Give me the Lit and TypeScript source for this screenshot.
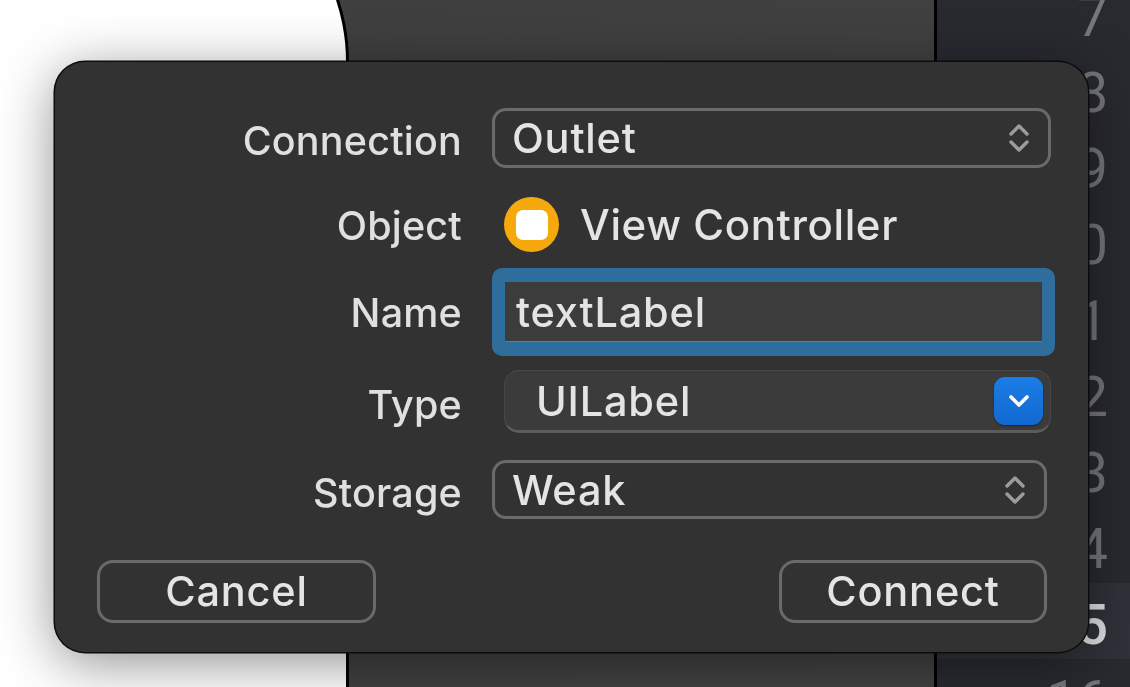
import { LitElement, html, css, svg } from "lit";
import { customElement } from "lit/decorators.js";

const stepper = svg`<svg class="stepper" width="24" height="32" viewBox="0 0 24 32" fill="none" stroke="#9c9c9c" stroke-width="3.4" stroke-linecap="round" stroke-linejoin="round"><path d="M4 12 L12 4 L20 12"/><path d="M4 20 L12 28 L20 20"/></svg>`;

@customElement("app-root")
export class AppRoot extends LitElement {
  static styles = css`
    :host { display: block; width: 1130px; height: 687px; overflow: hidden; position: relative; font-family: Inter, "Liberation Sans", sans-serif; background: #fff; }
    .stage { display: flex; height: 687px; overflow: hidden; }
    .canvas { width: 349px; flex: none; background: #404040; }
    .screen { box-sizing: border-box; width: 349px; height: 900px; margin-top: -138px; background: #fff; border-top: 3px solid #000; border-right: 3px solid #000; border-top-right-radius: 200px; }
    .panel { width: 585px; flex: none; background: linear-gradient(135deg, #3f3f3f, #424242); border-right: 3px solid #000; }
    .editor { flex: 1; background: #292a30; display: flex; flex-direction: column; margin-top: -25px; }
    .ln { flex: none; height: 76px; box-sizing: border-box; padding: 9px 22px 0 0; text-align: right; font: 400 55px/67px Roboto, sans-serif; color: #76777c; filter: blur(0.6px); }
    .ln.cur { background: #2f3239; color: #e0e0e2; font-weight: 500; }

    .dialog { position: absolute; left: 55px; top: 62px; width: 1033px; height: 590px; box-sizing: border-box; background: #323232; border-radius: 30px; box-shadow: 0 0 0 1.5px #0c0c0c, 0 10px 55px rgba(0,0,0,.45); padding-top: 46px; color: #e4e4e4; }
    .row { display: grid; grid-template-columns: 407px 1fr; column-gap: 30px; align-items: center; }
    .label { text-align: right; color: #e0e0e0; filter: blur(.5px); line-height: 1; font-size: 39.5px; font-weight: 500; letter-spacing: .2px; padding-top: 8px; }
    .val { filter: blur(.5px); line-height: 1; font-size: 41.5px; font-weight: 500; letter-spacing: .8px; }
    .popup { box-sizing: border-box; height: 60px; border: 3px solid #6a6a6a; border-radius: 14px; display: flex; align-items: center; justify-content: space-between; padding-left: 17px; }
    .popup .val { padding-top: 2px; }
    .r1 .popup { margin-right: 37px; padding-right: 17px; }
    .r5 .popup { margin-right: 41px; padding-right: 17px; height: 59px; }
    .r2 { margin-top: 29px; height: 55px; }
    .r2 .label { padding-top: 4px; }
    .obj { display: flex; align-items: center; gap: 21px; margin-left: 12px; }
    .obj .val { font-size: 42px; letter-spacing: .6px; }
    .cls { width: 55px; height: 55px; border-radius: 50%; background: #f5a90c; display: flex; align-items: center; justify-content: center; flex: none; }
    .cls i { display: block; width: 32px; height: 30px; border-radius: 7px; background: #fff; }
    .r3 { margin-top: 16px; }
    .r3 .label { padding-top: 4px; }
    .focus { box-sizing: border-box; height: 88px; margin-right: 33px; border-radius: 10px; background: #2f6d9d; padding: 14px 13px; }
    .focus div { box-sizing: border-box; height: 60px; background: #3c3c3c; border-bottom: 1px solid #5f7f99; display: flex; align-items: center; padding-left: 11px; }
    .focus .val { padding-top: 2px; }
    .r4 { margin-top: 14px; }
    .combo { box-sizing: border-box; height: 63px; margin-left: 12px; margin-right: 37px; border-radius: 15px; background: #3b3b3b; border: 1px solid #484848; border-bottom: 3px solid #5c5c5c; display: flex; align-items: center; justify-content: space-between; padding: 0 7px 0 31px; }
    .combo .val { padding-top: 2px; }
    .drop { width: 49px; height: 48px; border-radius: 11px; background: linear-gradient(#1b7de6, #1268d0); display: flex; align-items: center; justify-content: center; flex: none; box-shadow: 0 1px 2px rgba(0,0,0,.4); }
    .r5 { margin-top: 27px; }
    .actions { display: flex; justify-content: space-between; margin: 41px 41px 0 42px; }
    .btn { box-sizing: border-box; height: 63px; border: 3px solid #6a6a6a; border-radius: 16px; display: flex; align-items: center; justify-content: center; }
    .cancel { width: 279px; }
    .connect { width: 268px; }
    .stepper { flex: none; }
  `;

  render() {
    const nums = ["7", "8", "9", "10", "11", "12", "13", "14", "15", "16"];
    return html`
      <div class="stage">
        <div class="canvas"><div class="screen"></div></div>
        <div class="panel"></div>
        <div class="editor">
          ${nums.map((n, i) => html`<div class="ln ${i === 8 ? "cur" : ""}">${n}</div>`)}
        </div>
      </div>
      <div class="dialog">
        <div class="row r1"><div class="label">Connection</div><div class="popup"><span class="val">Outlet</span>${stepper}</div></div>
        <div class="row r2"><div class="label">Object</div><div class="obj"><span class="cls"><i></i></span><span class="val">View Controller</span></div></div>
        <div class="row r3"><div class="label">Name</div><div class="focus"><div><span class="val">textLabel</span></div></div></div>
        <div class="row r4"><div class="label">Type</div><div class="combo"><span class="val">UILabel</span><span class="drop"><svg width="22" height="14" viewBox="0 0 22 14" fill="none" stroke="#fff" stroke-width="3.6" stroke-linecap="round" stroke-linejoin="round"><path d="M3 3 L11 11 L19 3"/></svg></span></div></div>
        <div class="row r5"><div class="label">Storage</div><div class="popup"><span class="val">Weak</span>${stepper}</div></div>
        <div class="actions"><div class="btn cancel"><span class="val">Cancel</span></div><div class="btn connect"><span class="val">Connect</span></div></div>
      </div>
    `;
  }
}
